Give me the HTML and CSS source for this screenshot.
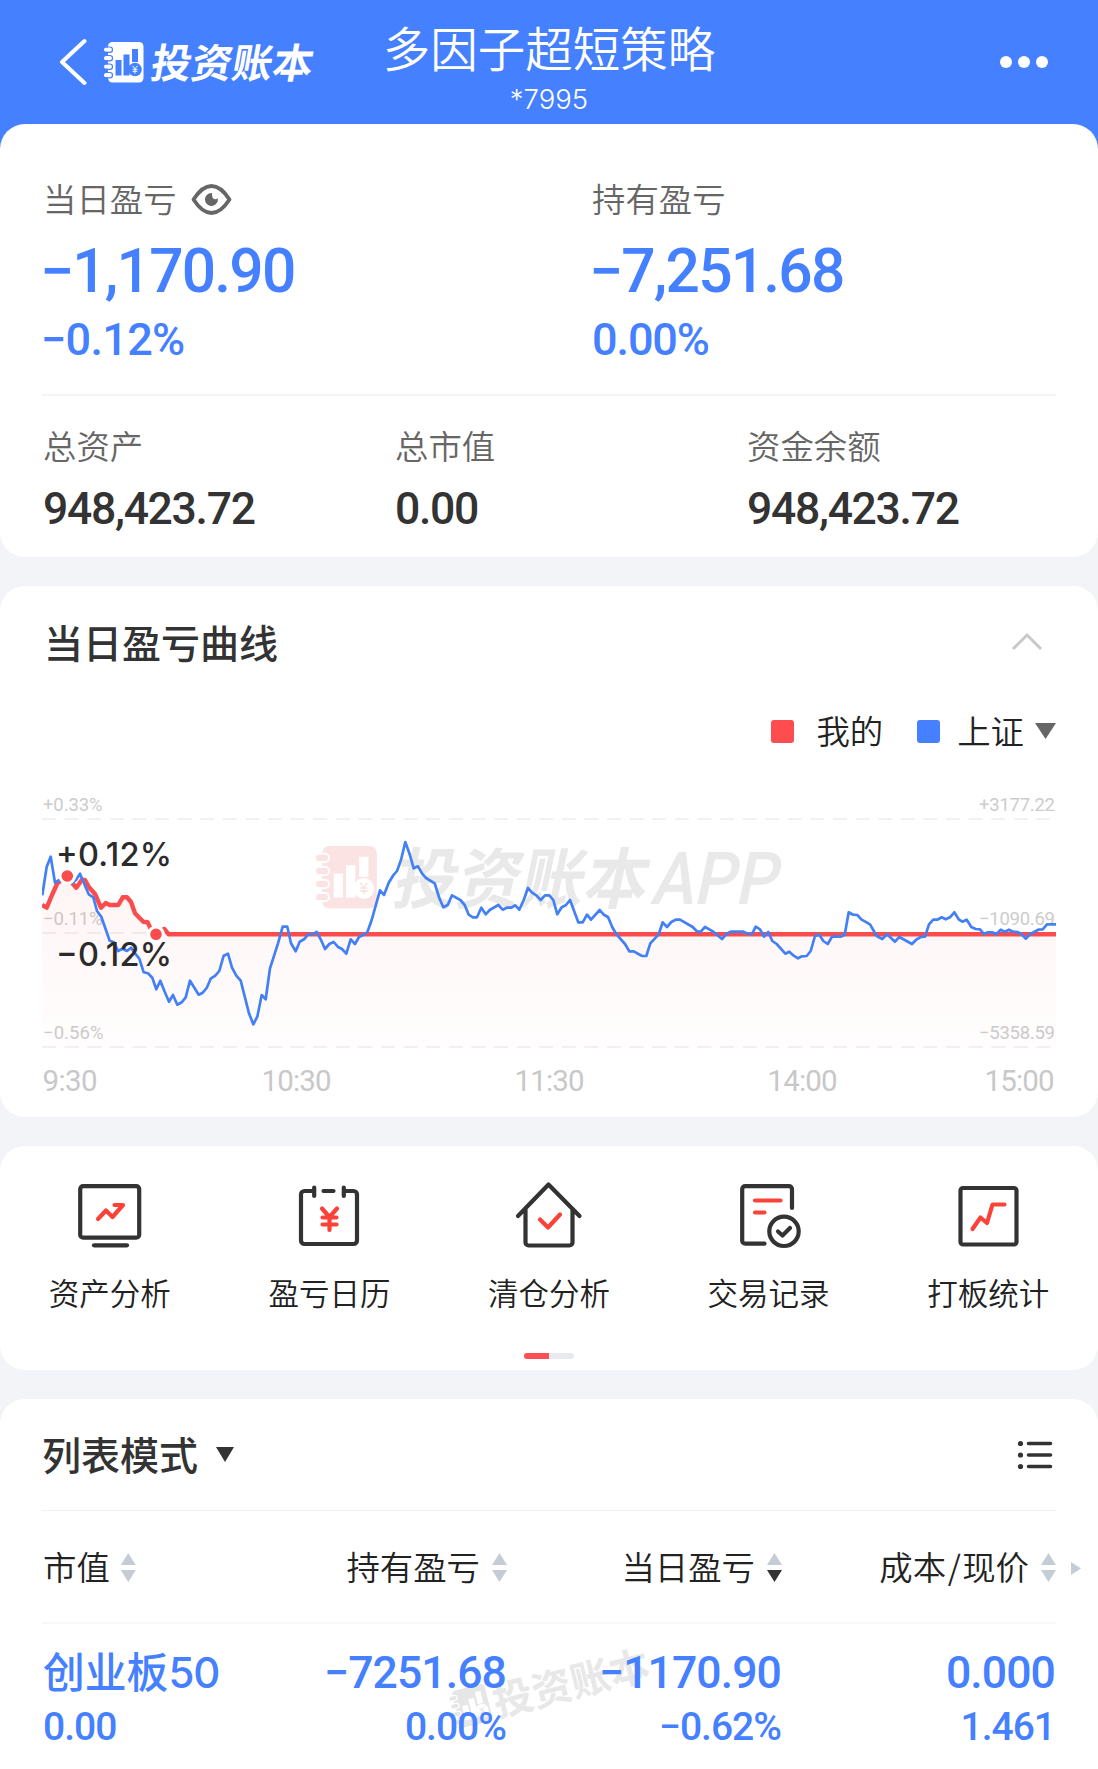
FILE: index.html
```html
<!DOCTYPE html>
<html lang="zh-CN">
<head>
    <meta charset="UTF-8">
    <meta name="viewport" content="width=device-width, initial-scale=1.0">
    <title>投资账本</title>
    <link rel="stylesheet" href="styles.css">
</head>
<body>
    <!-- notebook logo, used in the header and in both watermarks -->
    <svg class="defs" width="0" height="0">
        <defs>
            <mask id="bookMask">
                <rect x="0" y="0" width="40" height="41" fill="#fff"/>
                <g fill="none" stroke="#000" stroke-width="1.2">
                    <rect x="-2" y="5" width="10.5" height="5.4" rx="2.7"/>
                    <rect x="-2" y="13.5" width="10.5" height="5.4" rx="2.7"/>
                    <rect x="-2" y="22" width="10.5" height="5.4" rx="2.7"/>
                    <rect x="-2" y="30.5" width="10.5" height="5.4" rx="2.7"/>
                </g>
                <g fill="#000">
                    <rect x="11.5" y="18" width="6" height="15.5"/>
                    <rect x="19.5" y="12.500" width="6" height="21"/>
                    <rect x="28" y="7" width="6" height="13"/>
                    <circle cx="31" cy="27.500" r="6.800"/>
                </g>
                <path d="M28.600 23.800l2.400 3 2.400-3M31 26.800v4.700M28.600 27.300h4.800M28.600 29.300h4.800" fill="none" stroke="#fff" stroke-width="1"/>
            </mask>
            <g id="book">
                <g mask="url(#bookMask)">
                    <rect x="4" y="0" width="35.500" height="40.500" rx="4.500"/>
                    <rect x="0" y="5.600" width="8" height="4.200" rx="2.100"/>
                    <rect x="0" y="14.100" width="8" height="4.200" rx="2.100"/>
                    <rect x="0" y="22.600" width="8" height="4.200" rx="2.100"/>
                    <rect x="0" y="31.100" width="8" height="4.200" rx="2.100"/>
                </g>
            </g>
        </defs>
    </svg>

    <header class="topbar">
        <div class="brand">
            <svg class="back" width="30" height="50" viewBox="0 0 30 50"><path d="M27.500 4L5 25l22.500 21"/></svg>
            <svg class="logo" width="40" height="41" viewBox="0 0 40 41"><use href="#book"/></svg>
            <span class="brandName">投资账本</span>
        </div>
        <div class="heading">
            <h1>多因子超短策略</h1>
            <p>*7995</p>
        </div>
        <div class="more"><i></i><i></i><i></i></div>
    </header>

    <main>
        <section class="card summary">
            <div class="profit">
                <div>
                    <div class="label">当日盈亏
                        <svg class="eye" width="41" height="33" viewBox="0 0 41 33">
                            <path d="M2.500 16.500C8 8 14 3 20.500 3S33 8 38.500 16.500C33 25 27 30 20.500 30S8 25 2.500 16.500z" fill="none" stroke="#666" stroke-width="3.800" stroke-linejoin="round"/>
                            <path d="M21 10a6.500 6.500 0 1 0 5.800 5.200q-1.500 1.800-3.800.8t-2-6z" fill="#666"/>
                        </svg>
                    </div>
                    <div class="big minus">−1,170.90</div>
                    <div class="pct minus">−0.12%</div>
                </div>
                <div>
                    <div class="label">持有盈亏</div>
                    <div class="big minus">−7,251.68</div>
                    <div class="pct">0.00%</div>
                </div>
            </div>
            <div class="assets">
                <div>
                    <div class="label">总资产</div>
                    <div class="value">948,423.72</div>
                </div>
                <div>
                    <div class="label">总市值</div>
                    <div class="value">0.00</div>
                </div>
                <div>
                    <div class="label">资金余额</div>
                    <div class="value">948,423.72</div>
                </div>
            </div>
        </section>

        <section class="card curve">
            <div class="cardHead">
                <h2>当日盈亏曲线</h2>
                <svg class="fold" width="32" height="20" viewBox="0 0 32 20"><path d="M2 17L16 3l14 14"/></svg>
            </div>
            <div class="legend">
                <i class="mine"></i><span>我的</span>
                <i class="index"></i><span>上证</span>
                <b></b>
            </div>
            <svg class="chart" width="1014" height="318" viewBox="42 0 1014 318">
                <defs>
                    <linearGradient id="fade" x1="0" y1="0" x2="0" y2="1">
                        <stop offset="0" stop-color="#ff4d4f" stop-opacity=".06"/>
                        <stop offset="1" stop-color="#ff4d4f" stop-opacity=".01"/>
                    </linearGradient>
                </defs>
                <!-- watermark -->
                <use href="#book" fill="#fbe3e3" transform="translate(316 66) scale(1.54)"/>
                <g class="mark" transform="translate(391 123) skewX(-12)">
                    <text x="0" y="0" textLength="254" lengthAdjust="spacingAndGlyphs">投资账本</text>
                    <text class="app" x="259" y="1" textLength="126" lengthAdjust="spacingAndGlyphs">APP</text>
                </g>
                <g class="grid">
                    <path d="M42 39h1008M42 153h1008M42 267h1008"/>
                </g>
                <g class="scale">
                    <text x="43" y="31" textLength="59.500">+0.33%</text>
                    <text x="43" y="145" textLength="59.500">−0.11%</text>
                    <text x="43" y="259" textLength="60.500">−0.56%</text>
                    <text x="979" y="31" textLength="76">+3177.22</text>
                    <text x="979" y="145" textLength="76">−1090.69</text>
                    <text x="979" y="259" textLength="76">−5358.59</text>
                </g>
                <path fill="url(#fade)" d="M42 125L46.700 127.700 57.300 103.300 67.300 96 76.300 107.700 81.700 100 85 100 95 114 101 127.700 105.700 123 118.300 125 122.700 117.300 127 117.300 135 133.300 143.300 141.700 147.700 142.300 152 151.700 156 154 164.300 149 168.700 154.300 1056 154.300 1056 267 42 267z"/>
                <polyline class="mineLine" points="42,125 46.700,127.700 52,115 57.300,103.300 67.300,96 72.300,103.300 76.300,107.700 81.700,100 85,100 89,107.300 95,114 101,127.700 105.700,123 109.700,125 118.300,125 122.700,117.300 127,117.300 131,122 135,133.300 143.300,141.700 147.700,142.300 152,151.700 156,154 164.300,149 168.700,154.300 1056,154.300"/>
                <polyline class="indexLine" points="42.300,115.300 46.700,86.700 50.700,76.700 55,102.700 59.300,100 72.300,103 76,100 80,93.700 84.300,104 88.700,114.300 93.300,117.300 97,131 101.300,136.700 109.700,160.700 114,162.300 118,171 122.300,168.700 127,171 131,167.700 135,173.300 139.300,178.700 143.700,192.300 148,193.300 152.300,197.700 156.300,209.300 160.300,200.700 164.700,211.700 169,221.700 173,215 177.300,224.700 181.700,222.300 185.700,217.300 190,200.700 198.700,214.700 202.700,212.700 206.700,208 210.700,198.700 215.300,195.700 219.300,191 223.700,175.700 228,173.700 232,187.700 236.300,195.700 240.700,200.700 249,233.300 253.300,244.300 257.300,236.700 261.700,215 265.700,219.300 270,188.300 278,163.300 282.700,146.700 287.300,146.700 291,163.300 295.700,171.300 299.700,161.700 304,159.300 308,154.700 312.300,154.300 316.700,152 320.700,159.300 325,169 329.300,164 333.700,162 337.700,166.700 342,169 346.300,173.700 350.700,159.300 355,164 359,157 363.300,154.700 367.300,152.300 371.700,140 380,110.300 384,115 388.700,102.700 393,95.700 397,91 401,80 405.300,62 409.700,74.300 413.700,88.300 418,86.300 422,93.300 426,98 434.700,103.300 439.300,118 443.300,127.300 447.700,125 452,115.300 460.300,120 464.700,125 468.700,134.700 473,137.300 477,137.300 481.300,127.700 485.700,134.300 489.700,130 498.300,125 502.700,129.700 506.700,127.700 511,127.700 515.300,125.300 519.300,129.700 523.700,120 528,108 532,112.700 536.300,115.300 540.700,120 545,115.300 549.300,115.300 553.300,120 557.300,134.300 561.700,127.300 565.700,125.300 570,120 578.300,142.300 582.700,142.300 587,134.700 591,139.700 599.700,130 603.700,134.700 608,137 612.300,147.300 616.700,154.700 625,164 629.300,171.300 633.700,171.300 642,176 646.300,176 650.300,163.300 658.700,154.300 662.700,142.300 667,147 671.300,142 675.700,139.700 680,139.700 692.700,147 697.300,151.700 700.700,151.700 705,147 713.300,151.700 722,159 726.700,153.700 730.700,151.700 743.300,151.700 748.300,154 752,154 755.700,146.700 760,149.300 764,156.700 768.300,152 772.300,161 776.700,164 785.300,173.700 789.300,171.700 793.700,175.700 798,178.300 802,176.300 806.700,176 810.700,171 815,156 819.300,154.700 823.300,161 827.700,164 832,156.700 840.700,156.700 844.700,154.700 848.700,132.300 853,134.700 857.300,135 861.300,139.300 870,144.300 876.700,156 882.300,159 887,154.300 895,161.700 899.300,157 912,164 916.700,159.300 920.700,157 925,156.700 929,144.300 933.300,139.700 937.300,139.700 941.700,137.300 945.700,139.300 950,137.300 954.300,132.300 958.700,139.300 962.300,141.700 966.700,139.700 971.300,147 975.700,149 980,149.300 984,154 987.700,152.300 992.300,152.300 996.300,154.300 1000.700,149.700 1004.700,151.700 1009,149.700 1013,151.700 1017.300,152 1021.700,154.300 1025.700,158.700 1030,154.300 1038.300,149.700 1042.700,149.300 1047,144.300 1056,144.300"/>
                <g class="peak">
                    <circle cx="67.300" cy="96" r="7.300"/>
                    <circle cx="156" cy="154.300" r="7.300"/>
                </g>
                <g class="tip">
                    <text x="56" y="85.500" textLength="116">+0.12%</text>
                    <text x="56" y="186" textLength="116">−0.12%</text>
                </g>
                <g class="time">
                    <text x="42.500" y="311" textLength="55">9:30</text>
                    <text x="261.500" y="311" textLength="70">10:30</text>
                    <text x="514.500" y="311" textLength="70">11:30</text>
                    <text x="767.500" y="311" textLength="70">14:00</text>
                    <text x="984.500" y="311" textLength="70">15:00</text>
                </g>
            </svg>
        </section>

        <section class="card tools">
            <div class="toolRow">
                <a class="tool">
                    <svg width="70" height="70" viewBox="0 0 70 70">
                        <rect x="5.200" y="6.200" width="59" height="51.500" rx="3"/>
                        <path d="M19 65.300h33"/>
                        <path class="red" d="M23 39l8-8.500 6.500 6.500L48 25h-8.500"/>
                    </svg>
                    <span>资产分析</span>
                </a>
                <a class="tool">
                    <svg width="70" height="70" viewBox="0 0 70 70">
                        <path d="M19.500 11h-9a3.500 3.500 0 0 0-3.500 3.500v46a3.500 3.500 0 0 0 3.500 3.500h49a3.500 3.500 0 0 0 3.500-3.500v-46a3.500 3.500 0 0 0-3.500-3.500H50.500M20.200 7.500v8.500M49.800 7.500v8.500M29.500 11h10"/>
                        <path class="red" d="M28 28.500l7.500 8.500 7.500-8.500M28.500 37.500h14M28.500 44.500h14M35.500 37.500V50"/>
                    </svg>
                    <span>盈亏日历</span>
                </a>
                <a class="tool">
                    <svg width="70" height="70" viewBox="0 0 70 70">
                        <path d="M4 36L34.500 4.500 65.500 36M11.500 29v33.500a3 3 0 0 0 3 3h41a3 3 0 0 0 3-3V29"/>
                        <path class="red" d="M26 39.500l8 8L46 34.500"/>
                    </svg>
                    <span>清仓分析</span>
                </a>
                <a class="tool">
                    <svg width="70" height="70" viewBox="0 0 70 70">
                        <path d="M58 28V9.200a3 3 0 0 0-3-3H11.200a3 3 0 0 0-3 3v51.500a3 3 0 0 0 3 3H30.500"/>
                        <circle cx="50" cy="51.300" r="14.700"/>
                        <path d="M44 51.500l4.500 4 7.500-7.500"/>
                        <path class="red" d="M21 20.500h25.500M21 32.500h9.500"/>
                    </svg>
                    <span>交易记录</span>
                </a>
                <a class="tool">
                    <svg width="70" height="70" viewBox="0 0 70 70">
                        <rect x="7.500" y="8" width="56" height="56.500" rx="2.500"/>
                        <path class="red" d="M19.500 49l8-11.500 6.500 5.500L39.500 24.500h12"/>
                    </svg>
                    <span>打板统计</span>
                </a>
            </div>
            <div class="pager"><i></i></div>
        </section>

        <section class="card list">
            <div class="listHead">
                <h2>列表模式</h2>
                <b></b>
                <svg width="36" height="30" viewBox="0 0 36 30">
                    <path d="M11.500 3.500h22M11.500 15h22M11.500 26.500h22"/>
                    <circle cx="3.500" cy="3.500" r="2.600"/><circle cx="3.500" cy="15" r="2.600"/><circle cx="3.500" cy="26.500" r="2.600"/>
                </svg>
            </div>
            <div class="cols colHead">
                <div><span>市值</span><i class="sort"></i></div>
                <div><span>持有盈亏</span><i class="sort"></i></div>
                <div><span>当日盈亏</span><i class="sort desc"></i></div>
                <div><span>成本<u>/</u>现价</span><i class="sort"></i></div>
                <em></em>
            </div>
            <div class="cols row">
                <div><strong class="name">创业板<b>50</b></strong><span>0.00</span></div>
                <div><strong>−7251.68</strong><span>0.00%</span></div>
                <div><strong>−1170.90</strong><span>−0.62%</span></div>
                <div><strong>0.000</strong><span>1.461</span></div>
                <div class="stamp">
                    <svg width="38" height="39" viewBox="0 0 40 41"><use href="#book"/></svg>
                    <span>投资账本</span>
                </div>
            </div>
        </section>
    </main>
</body>
</html>
```
FILE: styles.css
```css
*{
    box-sizing: border-box;
    margin: 0;
    padding: 0;
}
body{
    width: 1098px;
    height: 1769px;
    overflow: hidden;
    background: linear-gradient(#4480ff 160px, #f3f4f7 160px);
    font-family: "Noto Sans CJK SC", sans-serif;
    color: #333;
}
.defs{
    position: absolute;
}
i, em{
    font-style: normal;
}

/* header */
.topbar{
    display: grid;
    grid-template-columns: 1fr 400px 1fr;
    height: 124px;
    color: #fff;
}
.brand{
    display: flex;
    align-items: flex-start;
    padding: 37px 0 0 57px;
}
.back path{
    fill: none;
    stroke: #fff;
    stroke-width: 4;
    stroke-linecap: round;
    stroke-linejoin: round;
}
.logo{
    margin: 5px 0 0 17px;
    fill: #fff;
}
.brandName{
    margin: 2px 0 0 8px;
    font-size: 40.500px;
    line-height: 44px;
    font-weight: 700;
    white-space: nowrap;
    transform: skewX(-10deg);
}
.heading{
    text-align: center;
    white-space: nowrap;
}
.heading h1{
    margin-top: 17px;
    font-size: 47.500px;
    line-height: 60px;
    font-weight: 350;
}
.heading p{
    margin-top: 7px;
    font: 300 27.500px/30px Inter, sans-serif;
}
.more{
    display: flex;
    justify-content: flex-end;
    gap: 6px;
    padding: 56px 50px 0 0;
}
.more i{
    width: 12px;
    height: 12px;
    border-radius: 50%;
    background: #fff;
}

/* cards */
.card{
    background: #fff;
    border-radius: 25px;
    margin-bottom: 29px;
}
main{
    background: linear-gradient(transparent 60px, #f3f4f7 60px);
}
.label{
    display: flex;
    align-items: center;
    font-size: 33.400px;
    line-height: 40px;
    font-weight: 350;
    color: #666;
}
.eye{
    margin: 2px 0 0 14px;
}
.summary{
    height: 433px;
    padding: 54px 42px 0;
}
.profit{
    display: grid;
    grid-template-columns: 549px 1fr;
    height: 218px;
    border-bottom: 2px solid #f3f4f6;
    padding-left: 1px;
}
.profit > div, .assets > div{
    white-space: nowrap;
}
.big{
    margin-top: 21px;
    font: 500 60.500px/66px Roboto, sans-serif;
    letter-spacing: -1.800px;
    color: #4480ff;
}
.pct{
    margin-top: 10px;
    font: 500 45px/50px Roboto, sans-serif;
    letter-spacing: -1.100px;
    color: #4480ff;
}
.minus{
    margin-left: -3px;
}
.pct.minus{
    margin-left: -2px;
    letter-spacing: -.7px;
}
.assets{
    display: grid;
    grid-template-columns: 352px 352px 1fr;
    padding: 29px 0 0 1px;
}
.value{
    margin-top: 19px;
    font: 500 44.500px/50px Roboto, sans-serif;
    letter-spacing: -1.300px;
    color: #333;
}

/* profit curve */
.curve{
    height: 531px;
    padding: 0 42px;
}
.cardHead{
    display: flex;
    justify-content: space-between;
    height: 84px;
    padding: 28px 13px 0 2px;
}
h2{
    font-size: 39px;
    line-height: 54px;
    font-weight: 500;
}
.fold{
    margin-top: 18px;
}
.fold path{
    fill: none;
    stroke: #c8c8c8;
    stroke-width: 3;
}
.legend{
    display: flex;
    align-items: center;
    justify-content: flex-end;
    height: 40px;
    margin-top: 40px;
    font-size: 33.400px;
    line-height: 40px;
    font-weight: 350;
    color: #222;
}
.legend i{
    width: 23px;
    height: 23px;
    margin-top: 2px;
    border-radius: 3px;
}
.legend span{
    margin: 0 0 0 22px;
}
.legend .mine{
    background: #ff4d4f;
}
.legend .index{
    margin-left: 34px;
    background: #4480ff;
}
.legend .index + span{
    margin-left: 17px;
}
.legend b{
    width: 21px;
    height: 16px;
    margin: 2px 0 0 11px;
    background: #666;
    clip-path: polygon(0 0, 100% 0, 50% 100%);
}
.chart{
    display: block;
    margin-top: 30px;
}
.mark{
    font-size: 66px;
    font-weight: 700;
    fill: #e9e9e9;
}
.mark .app{
    font: 500 73px Roboto, sans-serif;
}
.grid path{
    stroke: #f1f1f1;
    stroke-width: 2;
    stroke-dasharray: 14 8.600;
}
.scale{
    font: 400 18.500px Roboto, sans-serif;
    fill: #ccc;
}
.mineLine, .indexLine{
    fill: none;
    stroke-linejoin: round;
}
.mineLine{
    stroke: #fa4b4d;
    stroke-width: 4.400;
}
.indexLine{
    stroke: #4480f5;
    stroke-width: 2.700;
}
.peak circle{
    fill: #fa4b4d;
    stroke: #fff;
    stroke-width: 3;
}
.tip{
    font: 500 32.500px Inter, sans-serif;
    fill: #2b2b2b;
}
.time{
    font: 400 29.500px Roboto, sans-serif;
    fill: #c8c8c8;
}

/* shortcuts */
.tools{
    height: 224px;
}
.toolRow{
    display: grid;
    grid-template-columns: repeat(5, 1fr);
    padding-top: 34px;
}
.tool{
    display: flex;
    flex-direction: column;
    align-items: center;
    font-size: 30.500px;
    line-height: 40px;
    font-weight: 350;
    color: #222;
}
.tool span{
    margin-top: 22px;
}
.tool svg{
    fill: none;
    stroke: #333;
    stroke-width: 4.200;
    stroke-linecap: round;
    stroke-linejoin: round;
}
.tool .red{
    stroke: #fc4238;
}
.pager{
    width: 50px;
    height: 6px;
    margin: 41px auto 0;
    border-radius: 3px;
    background: #e8e9ee;
    overflow: hidden;
}
.pager i{
    display: block;
    width: 25px;
    height: 6px;
    background: #fa5053;
}

/* holdings */
.list{
    height: 400px;
    margin-bottom: 0;
    border-radius: 25px 25px 0 0;
    padding: 0 42px;
}
.listHead{
    display: flex;
    align-items: center;
    height: 112px;
    border-bottom: 1px solid #f2f2f4;
}
.listHead h2{
    margin-top: -3px;
}
.listHead b{
    width: 18px;
    height: 15px;
    margin-left: 18px;
    background: #333;
    clip-path: polygon(0 0, 100% 0, 50% 100%);
}
.listHead svg{
    margin-left: auto;
    margin-right: 3px;
    fill: #333;
    stroke-linecap: round;
}
.listHead path{
    stroke: #333;
    stroke-width: 3.600;
}
.cols{
    position: relative;
    display: grid;
    grid-template-columns: 200px 265px 275px 274px;
    text-align: right;
    white-space: nowrap;
}
.colHead{
    height: 113px;
    border-bottom: 2px solid #f7f7f9;
    font-size: 33.400px;
    font-weight: 350;
    color: #222;
}
.colHead > div{
    display: flex;
    align-items: center;
    justify-content: flex-end;
}
.colHead span{
    margin-top: -2px;
}
.colHead u{
    text-decoration: none;
    margin: 0 1.500px;
}
.cols > div:first-child{
    justify-content: flex-start;
    text-align: left;
    padding-left: 1px;
}
.sort{
    width: 15px;
    height: 29px;
    margin: 2px 0 0 12px;
}
.cols > div:first-child .sort{
    margin-left: 11px;
}
.sort::before, .sort::after{
    content: "";
    display: block;
    height: 12px;
    background: #c4cdd5;
    clip-path: polygon(50% 0, 100% 100%, 0 100%);
}
.sort::after{
    margin-top: 5px;
    clip-path: polygon(0 0, 100% 0, 50% 100%);
}
.sort.desc::after{
    background: #333;
}
.colHead em{
    position: absolute;
    right: -25px;
    top: 51px;
    width: 10px;
    height: 13px;
    background: #c4cdd5;
    clip-path: polygon(0 0, 100% 50%, 0 100%);
}
.row{
    padding-top: 23px;
    color: #4480ff;
}
.row strong, .row > div > span{
    display: block;
    height: 52px;
    position: relative;
    z-index: 1;
    padding-right: 1px;
}
.row strong{
    font: 500 44.500px/52px Roboto, sans-serif;
    letter-spacing: -.9px;
}
.row .name{
    font: 500 41.800px/46px "Noto Sans CJK SC", sans-serif;
    letter-spacing: 0;
}
.name b{
    font: 500 42px/46px Inter, sans-serif;
    letter-spacing: -1px;
}
.row span{
    margin-top: 2px;
    font: 500 39px/52px Roboto, sans-serif;
    letter-spacing: -1px;
}
.row .stamp{
    position: absolute;
    left: 407px;
    top: 36px;
    display: flex;
    align-items: center;
    gap: 4px;
    transform: rotate(-14deg);
}
.stamp svg{
    fill: #e6e6e6;
}
.row .stamp span{
    margin: 0;
    font: 700 40px/52px "Noto Sans CJK SC", sans-serif;
    letter-spacing: 0;
    color: #e8e8e8;
}
```
